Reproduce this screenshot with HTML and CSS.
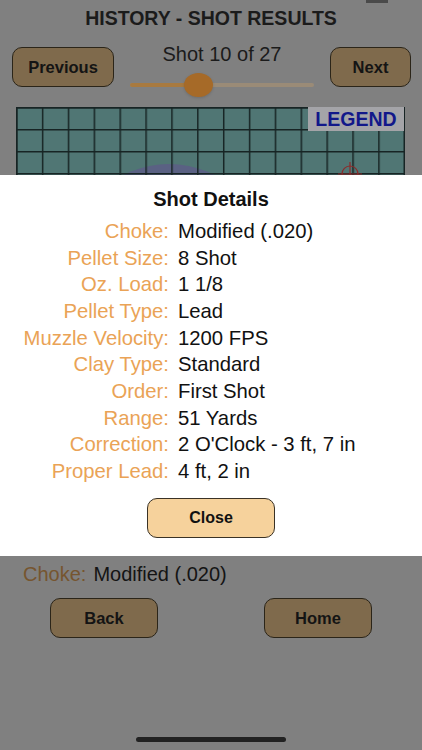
FILE: index.html
```html
<!DOCTYPE html>
<html lang="en">
<head>
    <meta charset="UTF-8">
    <meta name="viewport" content="width=device-width, initial-scale=1.0">
    <title>History - Shot Results</title>
    <link rel="stylesheet" href="styles.css">
</head>
<body>
    <div class="status-notch"></div>

    <h1 class="title">HISTORY - SHOT RESULTS</h1>

    <div class="nav-row">
        <button class="btn btn-prev">Previous</button>
        <div class="shot-picker">
            <div class="shot-count">Shot 10 of 27</div>
            <div class="slider">
                <div class="track">
                    <div class="track-fill" style="width: 68px"></div>
                </div>
                <div class="thumb" style="left: 54px"></div>
            </div>
        </div>
        <button class="btn btn-next">Next</button>
    </div>

    <div class="target">
        <svg class="target-grid" viewBox="0 0 389 440" width="389" height="440">
            <defs>
                <pattern id="cell" width="25.87" height="22" patternUnits="userSpaceOnUse">
                    <path d="M0 0.75H25.87M0.75 0V22" stroke="#172424" stroke-width="1.5" fill="none" />
                </pattern>
            </defs>
            <rect x="0" y="0" width="389" height="440" fill="#507674" />
            <circle cx="153" cy="157" r="100" fill="#5a6183" />
            <rect x="0" y="0" width="389" height="440" fill="url(#cell)" />
            <rect x="0.75" y="0.75" width="387.5" height="438.5" fill="none" stroke="#172424" stroke-width="1.5" />
            <g stroke="#8c2a2a" stroke-width="1.2" fill="none">
                <circle cx="334" cy="67" r="8" />
                <path d="M334 55V79M322 67H346" />
            </g>
        </svg>
        <div class="legend">LEGEND</div>
    </div>

    <div class="summary">
        <span class="summary-label">Choke:</span><span class="summary-value">Modified (.020)</span>
    </div>

    <div class="footer-row">
        <button class="btn btn-wide">Back</button>
        <button class="btn btn-wide">Home</button>
    </div>

    <div class="modal">
        <div class="modal-title">Shot Details</div>
        <div class="details">
            <div class="detail-label">Choke:</div><div class="detail-value">Modified (.020)</div>
            <div class="detail-label">Pellet Size:</div><div class="detail-value">8 Shot</div>
            <div class="detail-label">Oz. Load:</div><div class="detail-value">1 1/8</div>
            <div class="detail-label">Pellet Type:</div><div class="detail-value">Lead</div>
            <div class="detail-label">Muzzle Velocity:</div><div class="detail-value">1200 FPS</div>
            <div class="detail-label">Clay Type:</div><div class="detail-value">Standard</div>
            <div class="detail-label">Order:</div><div class="detail-value">First Shot</div>
            <div class="detail-label">Range:</div><div class="detail-value">51 Yards</div>
            <div class="detail-label">Correction:</div><div class="detail-value">2 O'Clock - 3 ft, 7 in</div>
            <div class="detail-label">Proper Lead:</div><div class="detail-value">4 ft, 2 in</div>
        </div>
        <button class="btn btn-close">Close</button>
    </div>

    <div class="home-indicator"></div>
</body>
</html>
```

FILE: styles.css
```css
body {
    font-family: "Liberation Sans", Arial, sans-serif;
    background-color: #808080;
    color: #1b1b1b;
    margin: 0;
    padding: 0;
    height: 750px;
    overflow: hidden;
}

.status-notch {
    position: absolute;
    top: 0;
    left: 366px;
    width: 22px;
    height: 3px;
    background-color: #4a4a4a;
}

.title {
    margin: 0;
    padding-top: 6px;
    font-size: 19.5px;
    line-height: 24px;
    font-weight: bold;
    text-align: center;
}

.nav-row {
    display: flex;
    align-items: flex-start;
    margin-top: 17px;
    padding: 0 11px 0 12px;
}

.btn {
    box-sizing: border-box;
    height: 40px;
    padding: 0;
    font-family: "Liberation Sans", Arial, sans-serif;
    font-size: 16.5px;
    font-weight: bold;
    color: #141414;
    background-color: #7f6a4c;
    border: 1.5px solid #2b2519;
    border-radius: 10px;
}

.btn-prev {
    width: 102px;
}

.btn-next {
    width: 81px;
}

.shot-picker {
    flex: 1;
    margin-top: -4px;
}

.shot-count {
    font-size: 20px;
    line-height: 22px;
    text-align: center;
}

.slider {
    position: relative;
    height: 24px;
    margin: 8px 16px 0;
}

.track {
    position: absolute;
    top: 10px;
    left: 0;
    right: 0;
    height: 4px;
    border-radius: 2px;
    background-color: #9a8b77;
}

.track-fill {
    height: 100%;
    border-radius: 2px;
    background-color: #a87a40;
}

.thumb {
    position: absolute;
    top: 0;
    width: 29px;
    height: 24px;
    border-radius: 50%;
    background-color: #a66a28;
    box-shadow: 0 1px 3px rgba(0, 0, 0, 0.15);
}

.target {
    position: relative;
    margin: 10px 17px 0 16px;
    height: 440px;
}

.target-grid {
    display: block;
}

.legend {
    position: absolute;
    top: 0;
    right: 1px;
    width: 96px;
    height: 24px;
    background-color: #a4a4a8;
    color: #12188a;
    font-size: 19.5px;
    font-weight: bold;
    line-height: 25px;
    text-align: center;
}

.summary {
    margin-top: 16px;
    padding-left: 23px;
    font-size: 20px;
    line-height: 22px;
}

.summary-label {
    color: #76552f;
}

.summary-value {
    margin-left: 7px;
    color: #141414;
}

.footer-row {
    display: flex;
    justify-content: space-between;
    margin-top: 13px;
    padding: 0 50px;
}

.btn-wide {
    width: 108px;
}

.modal {
    position: fixed;
    top: 175px;
    left: 0;
    width: 100%;
    height: 381px;
    box-sizing: border-box;
    padding-top: 12px;
    background-color: #fff;
    display: flex;
    flex-direction: column;
    align-items: center;
}

.modal-title {
    font-size: 20px;
    line-height: 24px;
    font-weight: bold;
    color: #111;
    margin-bottom: 7px;
}

.details {
    align-self: stretch;
    display: grid;
    grid-template-columns: 169px 1fr;
    column-gap: 9px;
    font-size: 20.3px;
    line-height: 26.67px;
}

.detail-label {
    text-align: right;
    color: #eaa356;
    white-space: nowrap;
}

.detail-value {
    color: #111;
    white-space: nowrap;
}

.btn-close {
    width: 128px;
    margin-top: 13px;
    background-color: #f6d29c;
    border-color: #3a3226;
    font-size: 16px;
    color: #111;
}

.home-indicator {
    position: fixed;
    left: 136px;
    bottom: 8px;
    width: 150px;
    height: 5px;
    border-radius: 3px;
    background-color: #222;
}
```
